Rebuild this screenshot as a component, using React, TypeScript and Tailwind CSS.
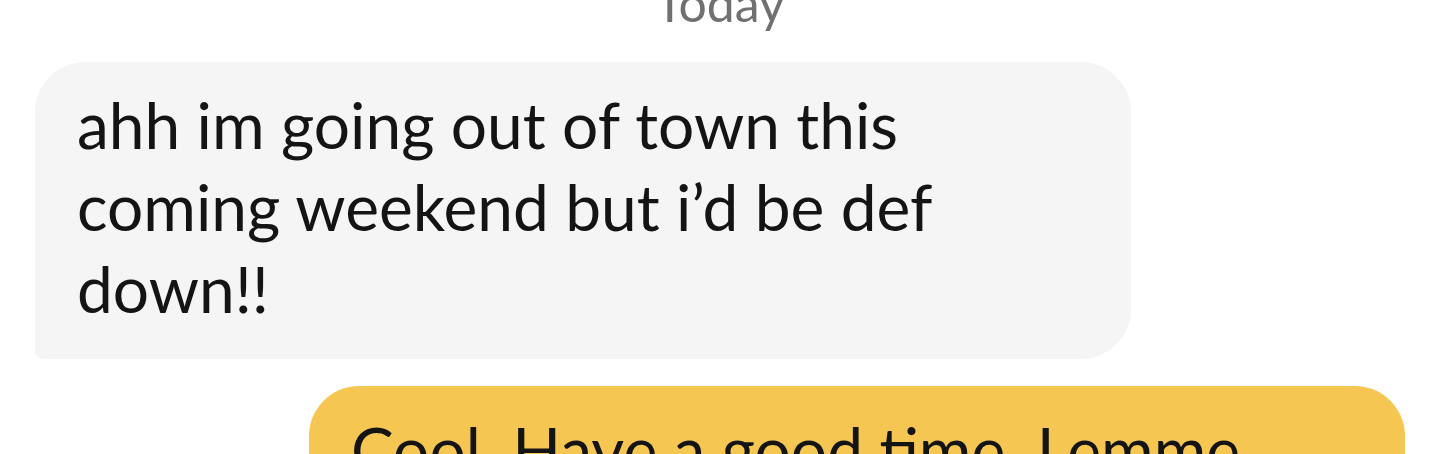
export default function App() {
  return (
    <div className="h-[454px] overflow-hidden bg-white font-['Lato','Liberation_Sans',sans-serif]">
      <div className="-mt-[22px] flex flex-col">
        <div className="text-center text-[50px] leading-[50px] text-[#707070]">Today</div>

        {/* incoming message */}
        <div className="mt-[34px] px-[35px] flex">
          <div className="w-[1096px] rounded-[50px] rounded-bl-[8px] bg-[#f5f5f5] pl-[42px] pt-[22px] pb-[29px]">
            <p className="w-[950px] text-[64px] leading-[82px] text-[#141414]">
              ahh im going out of town this coming weekend but i’d be def down!!
            </p>
          </div>
        </div>

        {/* outgoing message */}
        <div className="mt-[27px] px-[35px] flex justify-end">
          <div className="w-[1096px] rounded-[50px] rounded-br-[8px] bg-[#f5c651] pl-[42px] pt-[23px] pb-[27px]">
            <p className="w-[950px] text-[64px] leading-[82px] text-[#141414]">
              Cool. Have a good time. Lemme know when you’re back!
            </p>
          </div>
        </div>
      </div>
    </div>
  )
}
